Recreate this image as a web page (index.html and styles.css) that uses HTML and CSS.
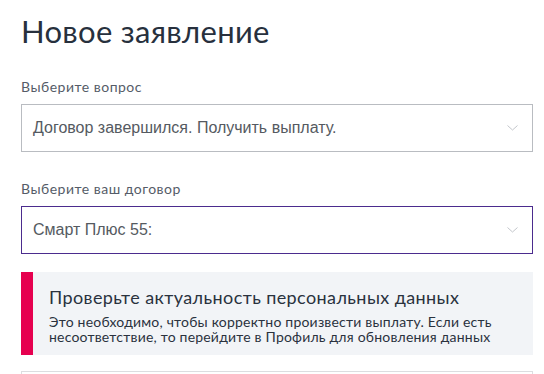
FILE: index.html
```html
<!DOCTYPE html>
<html>
<head>
<meta name="viewport" content="width=device-width, initial-scale=1">
<link rel="stylesheet" href="styles.css">
</head>
<body>

<div class="page">
  <h1 class="title">Новое заявление</h1>

  <div class="field">
    <div class="field-label">Выберите вопрос</div>
    <div class="select">
      <span class="select-value">Договор завершился. Получить выплату.</span>
      <svg class="chevron" width="11" height="6" viewBox="0 0 11 6"><path d="M0.5 0.5 L5.5 5 L10.5 0.5" fill="none" stroke="#c3c6cb" stroke-width="1"/></svg>
    </div>
  </div>

  <div class="field">
    <div class="field-label">Выберите ваш договор</div>
    <div class="select select-active">
      <span class="select-value">Смарт Плюс 55:</span>
      <svg class="chevron" width="11" height="6" viewBox="0 0 11 6"><path d="M0.5 0.5 L5.5 5 L10.5 0.5" fill="none" stroke="#c3c6cb" stroke-width="1"/></svg>
    </div>
  </div>

  <div class="notice">
    <div class="notice-title">Проверьте актуальность персональных данных</div>
    <div class="notice-text">Это необходимо, чтобы корректно произвести выплату. Если есть несоответствие, то перейдите в Профиль для обновления данных</div>
  </div>

  <div class="next-box"></div>
</div>

</body>
</html>
```

FILE: styles.css
```css
body {
  margin: 0;
  background: #ffffff;
  font-family: 'Lato', 'Open Sans', sans-serif;
  overflow: hidden;
}

.page {
  padding: 11px 11px 0 21px;
  width: 512px;
}

.title {
  margin: 0 0 28px 0;
  font-weight: 400;
  font-size: 31px;
  line-height: 40px;
  color: #27303d;
  letter-spacing: 0.3px;
}

.field {
  margin-bottom: 29px;
}

.field-label {
  font-size: 14px;
  line-height: 16px;
  color: #555c68;
  margin-bottom: 9px;
  letter-spacing: 0.5px;
}

.select {
  height: 46px;
  border: 1px solid #b9bcc1;
  display: flex;
  align-items: center;
  justify-content: space-between;
  padding: 0 14px 0 11px;
}

.select-active {
  border-color: #4b2c8e;
}

.select-value {
  font-family: 'Liberation Sans', Arial, sans-serif;
  font-size: 16px;
  color: #555a61;
}

.chevron {
  display: block;
}

.notice {
  margin-top: -11px;
  background: #f2f4f7;
  border-left: 12px solid #e6004f;
  padding: 14px 16px 11px 16px;
}

.notice-title {
  font-size: 18px;
  line-height: 22px;
  color: #2a323e;
  margin-bottom: 6px;
  letter-spacing: 0.4px;
}

.notice-text {
  font-size: 14px;
  line-height: 15px;
  color: #2a323e;
  letter-spacing: 0.2px;
}

.next-box {
  margin-top: 16px;
  height: 40px;
  border: 1px solid #dcdde0;
}
```
